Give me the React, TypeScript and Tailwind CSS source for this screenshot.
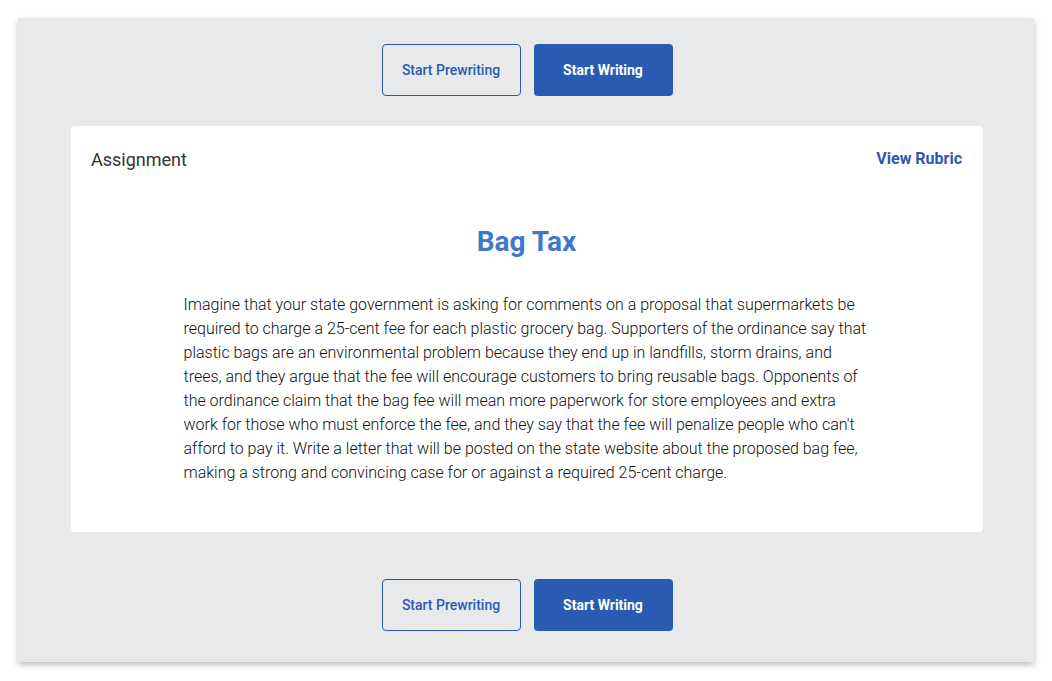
import React from "react";

const prompt =
  "Imagine that your state government is asking for comments on a proposal that supermarkets be required to charge a 25-cent fee for each plastic grocery bag. Supporters of the ordinance say that plastic bags are an environmental problem because they end up in landfills, storm drains, and trees, and they argue that the fee will encourage customers to bring reusable bags. Opponents of the ordinance claim that the bag fee will mean more paperwork for store employees and extra work for those who must enforce the fee, and they say that the fee will penalize people who can't afford to pay it. Write a letter that will be posted on the state website about the proposed bag fee, making a strong and convincing case for or against a required 25-cent charge.";

function Actions() {
  return (
    <div className="flex justify-center gap-[13px]">
      <button className="w-[139px] h-[52px] rounded-[4px] border border-[#2a5bb2] text-[#2a5bb2] text-[14px] font-medium">
        Start Prewriting
      </button>
      <button className="w-[139px] h-[52px] rounded-[4px] bg-[#2a5bb2] text-white text-[14px] font-bold">
        Start Writing
      </button>
    </div>
  );
}

export default function App() {
  return (
    <div className="min-h-screen bg-white p-[18px] pb-[19px] font-['Roboto',sans-serif]">
      <div className="bg-[#e8e9eb] shadow-[0_3px_6px_rgba(0,0,0,0.25)] pt-[26px] pb-[31px] pl-[53px] pr-[51px]">
        <Actions />
        <div className="bg-white rounded-[4px] mt-[30px] mb-[47px] pt-[21px] pb-[47px] pl-[20px] pr-[21px]">
          <div className="flex items-center justify-between h-[24px]">
            <span className="text-[18px] text-[#333]">Assignment</span>
            <a className="text-[16px] font-bold text-[#2a5bb2]">View Rubric</a>
          </div>
          <h1 className="mt-[55px] text-center text-[28px] leading-[32px] font-bold text-[#3e78cc]">
            Bag Tax
          </h1>
          <p className="w-[686px] mx-auto mt-[35px] text-[16px] leading-[24px] font-light text-[#111]">
            {prompt}
          </p>
        </div>
        <Actions />
      </div>
    </div>
  );
}
